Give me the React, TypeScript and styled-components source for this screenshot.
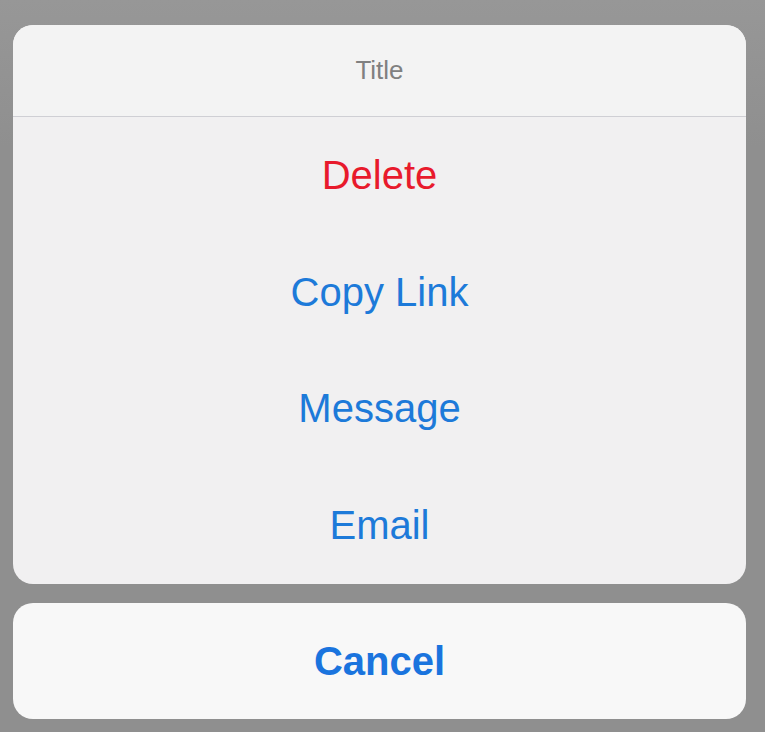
import React from "react";
import styled, { createGlobalStyle } from "styled-components";

const Global = createGlobalStyle`
  html, body { margin: 0; padding: 0; background: #909090; }
  body { font-family: "Liberation Sans", Arial, sans-serif; }
`;

const Page = styled.div`
  width: 765px;
  height: 732px;
  box-sizing: border-box;
  padding: 25px 19px 0 13px;
  display: flex;
  flex-direction: column;
  gap: 19px;
  background: linear-gradient(#979797, #8f8f8f 20%, #8f8f8f);
`;

const Sheet = styled.div`
  height: 559px;
  border-radius: 20px;
  background: #f1f0f1;
  display: flex;
  flex-direction: column;
  overflow: hidden;
`;

const TitleRow = styled.div`
  height: 91px;
  flex: none;
  display: flex;
  align-items: center;
  justify-content: center;
  font-size: 26px;
  color: #808080;
  background: #f3f3f3;
  border-bottom: 1px solid #cfcfd4;
`;

const Action = styled.div<{ $danger?: boolean }>`
  flex: 1;
  display: flex;
  align-items: center;
  justify-content: center;
  font-size: 40px;
  color: ${(p) => (p.$danger ? "#e81a2c" : "#1d7ad9")};
`;

const CancelCard = styled.div`
  height: 116px;
  border-radius: 20px;
  background: #f8f8f8;
  display: flex;
  align-items: center;
  justify-content: center;
  font-size: 40px;
  font-weight: bold;
  color: #1a74de;
`;

export default function App() {
  return (
    <>
      <Global />
      <Page>
        <Sheet>
          <TitleRow>Title</TitleRow>
          <Action $danger>Delete</Action>
          <Action>Copy Link</Action>
          <Action>Message</Action>
          <Action>Email</Action>
        </Sheet>
        <CancelCard>Cancel</CancelCard>
      </Page>
    </>
  );
}
